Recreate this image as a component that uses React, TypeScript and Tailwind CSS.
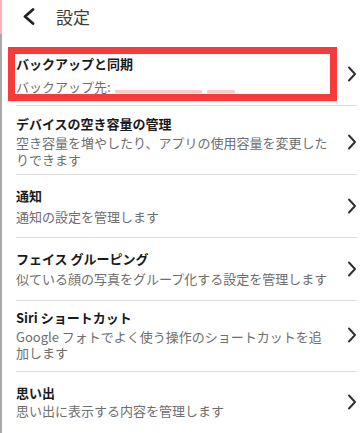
const Chevron = () => (
  <svg width="10" height="16" viewBox="0 0 10 16" className="shrink-0" fill="none">
    <path d="M2 1.5 L8 8 L2 14.5" stroke="#2f2f2f" strokeWidth="1.9" strokeLinecap="round" strokeLinejoin="round" />
  </svg>
);

const rows = [
  {
    title: "デバイスの空き容量の管理",
    sub: ["空き容量を増やしたり、アプリの使用容量を変更した", "りできます"],
    box: "pt-[9px] pb-[6px]",
    subCls: "mt-[1px] leading-[17px]",
  },
  {
    title: "通知",
    sub: ["通知の設定を管理します"],
    box: "pt-[12px] pb-[12px]",
    subCls: "mt-[3px] leading-[17px]",
  },
  {
    title: "フェイス グルーピング",
    sub: ["似ている顔の写真をグループ化する設定を管理します"],
    box: "pt-[12px] pb-[13px]",
    subCls: "mt-[2px] leading-[17px]",
  },
  {
    title: "Siri ショートカット",
    sub: ["Google フォトでよく使う操作のショートカットを追", "加します"],
    box: "pt-[8px] pb-[10px]",
    subCls: "mt-[2px] leading-[16px]",
  },
  {
    title: "思い出",
    sub: ["思い出に表示する内容を管理します"],
    box: "pt-[12px] pb-[12px]",
    subCls: "mt-0 leading-[17px]",
  },
];

export default function App() {
  return (
    <div
      className="flex h-[433px] w-[363px] overflow-hidden bg-white"
      style={{ fontFamily: '"Noto Sans CJK JP", "Noto Sans", sans-serif' }}
    >
      {/* window edge */}
      <div className="flex w-[2px] shrink-0 flex-col">
        <div className="h-[34px] bg-[#f6b3b3]" />
        <div className="flex-1 bg-[#a9a9a9]" />
      </div>

      <div className="flex flex-1 flex-col">
        <header className="flex h-[33px] items-center pl-[20px]">
          <svg width="13" height="17" viewBox="0 0 13 17" fill="none">
            <path d="M11 1.5 L3 8.5 L11 15.5" stroke="#222" strokeWidth="2.8" strokeLinecap="round" strokeLinejoin="round" />
          </svg>
          <span className="ml-[21px] text-[17px] leading-[20px] text-[#3d3d3d]">設定</span>
        </header>

        {/* highlighted row */}
        <div className="flex flex-col pt-[14px]">
          <div className="flex items-center pl-[6px] pr-[6px]">
            <div className="h-[54px] w-[329px] border-[7px] border-[#f93a3a] pl-px">
              <p className="mt-px text-[13px] font-bold leading-[18px] text-[#1a1a1a]">バックアップと同期</p>
              <p className="mt-[6px] flex items-end text-[13px] leading-[16px] text-[#6e6e6e]">
                バックアップ先:
                <span className="mb-[2px] ml-[4px] inline-block h-[3px] w-[87px] bg-[#ffc9c9]" />
                <span className="mb-[2px] ml-[5px] inline-block h-[3px] w-[28px] bg-[#ffcaca]" />
              </p>
            </div>
            <div className="ml-auto">
              <Chevron />
            </div>
          </div>
          <div className="ml-[14px] mr-[6px] mt-[4px] h-px bg-[#dedede]" />
        </div>

        {rows.map((r, i) => (
          <div
            key={r.title}
            className={`ml-[14px] mr-[6px] flex items-center justify-between ${
              i < rows.length - 1 ? "border-b border-[#dedede]" : ""
            } ${r.box}`}
          >
            <div>
              <p className="text-[13px] font-bold leading-[18px] text-[#1a1a1a]">{r.title}</p>
              <p className={`text-[13px] text-[#6e6e6e] ${r.subCls}`}>
                {r.sub.map((line, j) => (
                  <span key={j} className="block">
                    {line}
                  </span>
                ))}
              </p>
            </div>
            <Chevron />
          </div>
        ))}
      </div>
    </div>
  );
}
